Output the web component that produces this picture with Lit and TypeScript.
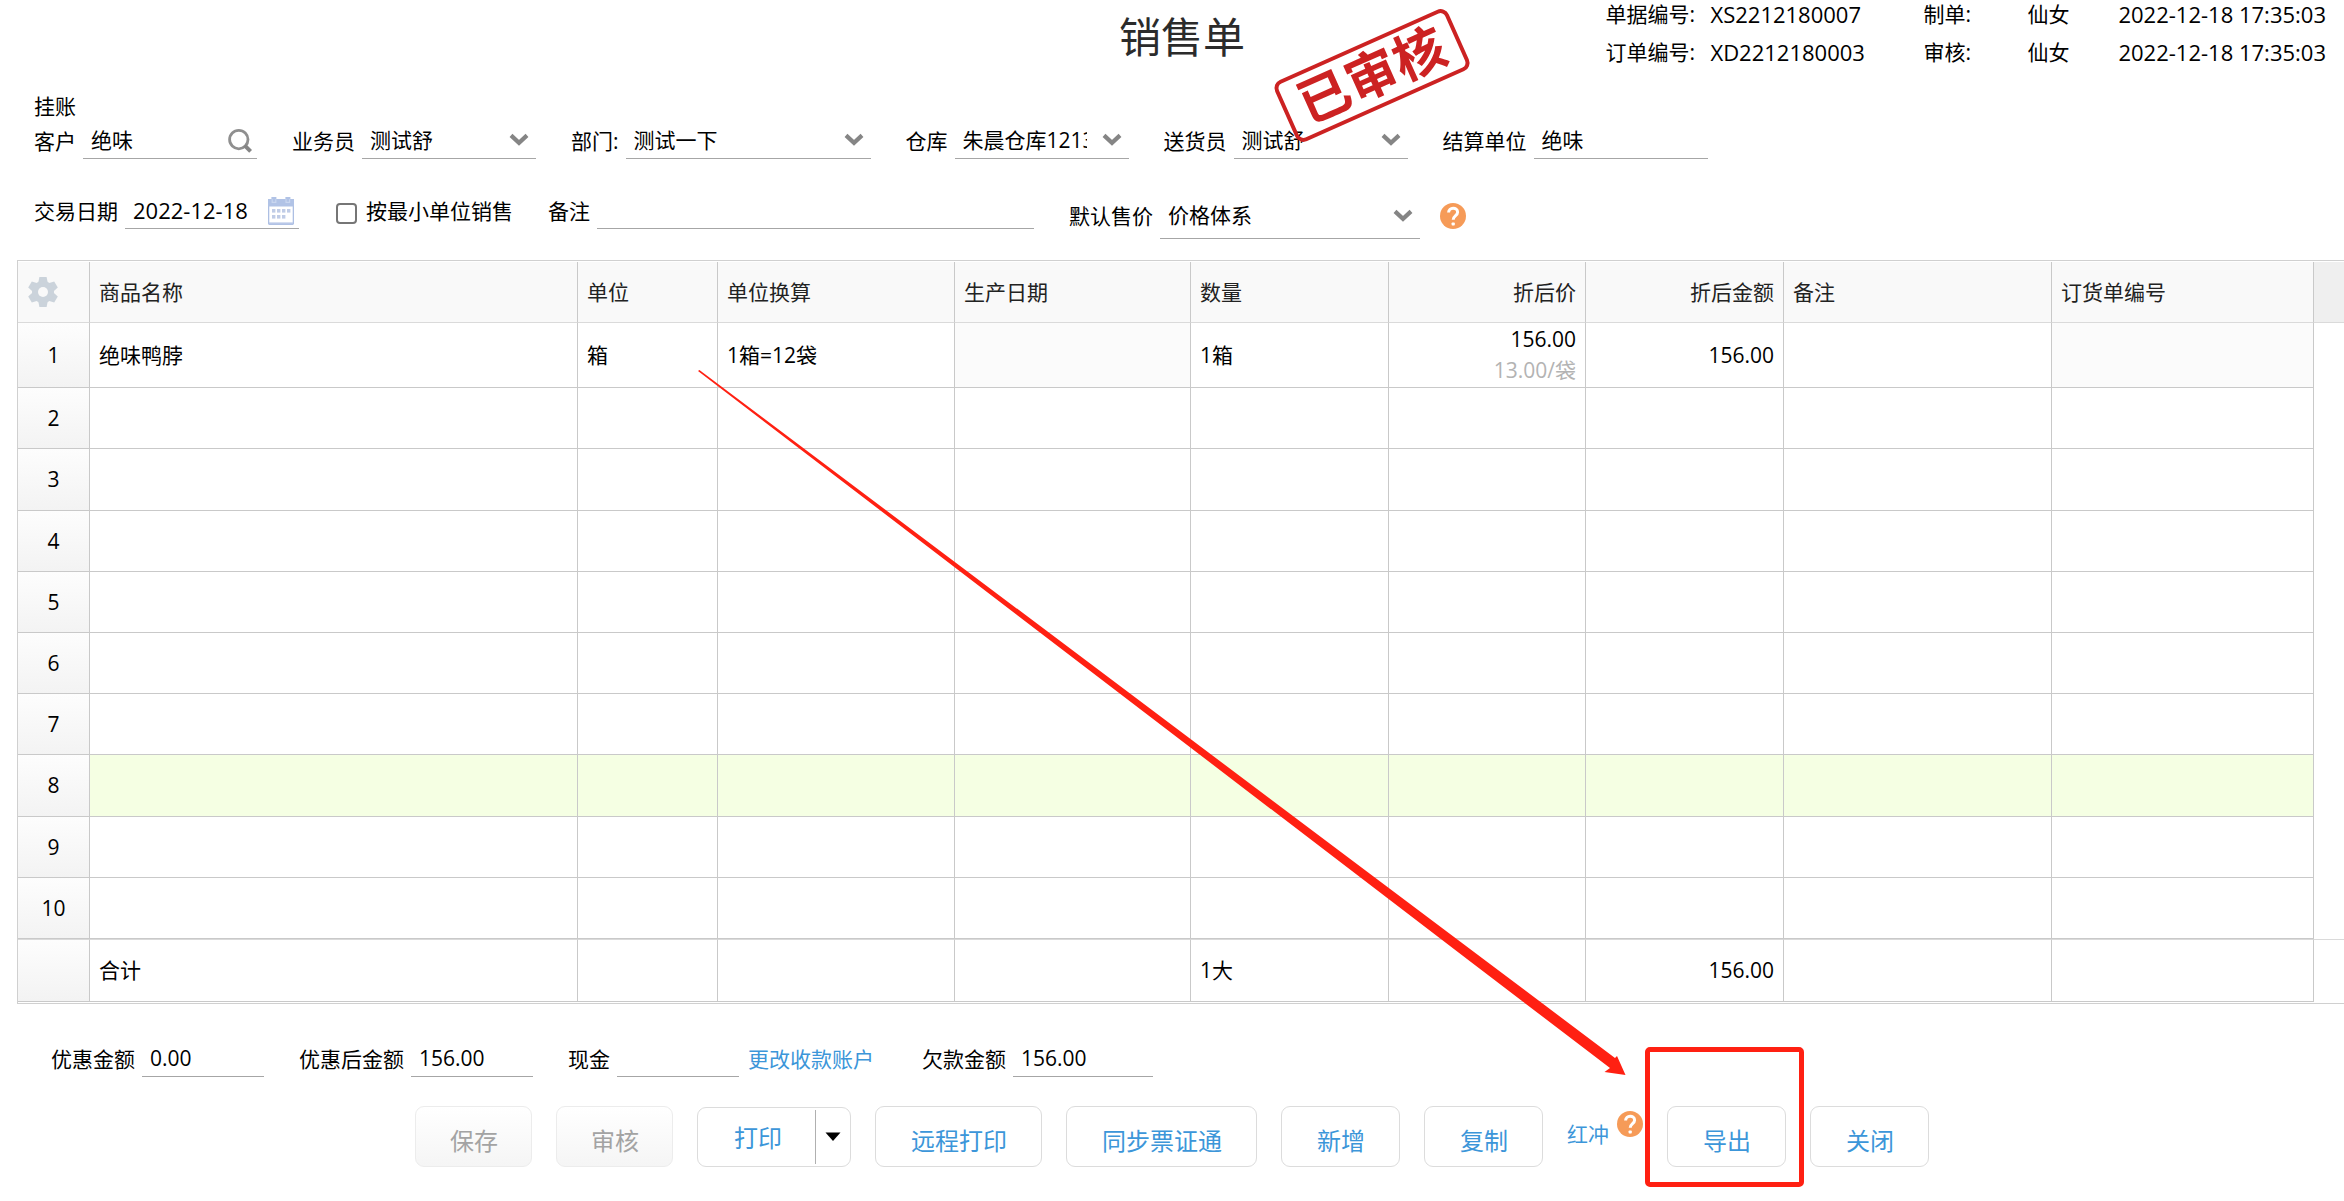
import { LitElement, html, css, nothing, svg } from "lit";
import { customElement } from "lit/decorators.js";
import { classMap } from "lit/directives/class-map.js";

interface Column {
  key: string;
  title: string;
  cls: string;
  right?: boolean;
}

interface Line {
  cells: Record<string, string>;
  locked?: string[];
  sub?: Record<string, string>;
  hover?: boolean;
}

const COLUMNS: Column[] = [
  { key: "name", title: "商品名称", cls: "c-name" },
  { key: "unit", title: "单位", cls: "c-unit" },
  { key: "convert", title: "单位换算", cls: "c-convert" },
  { key: "made", title: "生产日期", cls: "c-made" },
  { key: "qty", title: "数量", cls: "c-num" },
  { key: "price", title: "折后价", cls: "c-price", right: true },
  { key: "amount", title: "折后金额", cls: "c-num", right: true },
  { key: "remark", title: "备注", cls: "c-remark" },
  { key: "order", title: "订货单编号", cls: "c-order" },
];

const LINES: Line[] = Array.from({ length: 10 }, (_, i) =>
  i === 0
    ? {
        cells: { name: "绝味鸭脖", unit: "箱", convert: "1箱=12袋", qty: "1箱", price: "156.00", amount: "156.00" },
        sub: { price: "13.00/袋" },
        locked: ["made", "order"],
      }
    : { cells: {}, hover: i === 7 }
);

const TOTALS: Record<string, string> = { name: "合计", qty: "1大", amount: "156.00" };

const chevron = html`<svg class="chevron" viewBox="0 0 20 13" aria-hidden="true">
  <path d="M2 2.4 L10 9.8 L18 2.4" fill="none" stroke="#858585" stroke-width="4.2" />
</svg>`;

const searchIcon = html`<svg class="search-icon" viewBox="0 0 24 24" aria-hidden="true">
  <circle cx="10.8" cy="10.6" r="9.2" fill="none" stroke="#8f8f8f" stroke-width="2.8" />
  <path d="M16.6 16.4 L22.6 22.4" stroke="#858585" stroke-width="4" />
</svg>`;

const calendarIcon = html`<svg class="calendar-icon" viewBox="0 0 26 28" aria-hidden="true">
  <rect x="0.6" y="2.6" width="24.8" height="24.8" rx="1.4" fill="#fff" stroke="#adbfe3" stroke-width="1.4" />
  <path d="M0 2 h3.4 v-2 h5 v2 h9 v-2 h5 v2 h3.6 v7.6 h-26 z" fill="#b1c3e6" />
  <path d="M4.2 2.2 v3.2 h3.6 v-3.2 M18 2.2 v3.2 h3.6 v-3.2" fill="none" stroke="#c9d6ef" stroke-width="1.2" />
  <g fill="#c0cce6">
    ${[4, 9, 14, 19].map((x) => svg`<rect x=${x} y="12" width="3.4" height="3.6" />`)}
    ${[4, 9, 14].map((x) => svg`<rect x=${x} y="18" width="3.4" height="3.6" />`)}
  </g>
  <path d="M1 26.4 h24" stroke="#b9c8e8" stroke-width="2" />
</svg>`;

const helpIcon = html`<svg class="help-icon" viewBox="0 0 26 26" aria-hidden="true">
  <circle cx="13" cy="13" r="13" fill="#f69b58" />
  <path d="M8.6 9.6 C8.6 3.8 17.6 3.8 17.6 9.2 C17.6 12.6 13.2 12.6 13.2 16.8" fill="none" stroke="#fff" stroke-width="3" />
  <rect x="11.6" y="19.4" width="3.2" height="3.2" rx="0.8" fill="#fff" />
</svg>`;

const gearIcon = html`<svg class="gear-icon" viewBox="-15 -15 30 30" aria-hidden="true">
  <g fill="#cbd3db">
    ${[0, 60, 120].map(
      (a) => svg`<path d="M-4.6 -10 L-3.6 -15 H3.6 L4.6 -10 V10 L3.6 15 H-3.6 L-4.6 10 Z" transform="rotate(${a})" />`
    )}
    <circle r="11" />
  </g>
  <circle r="5" fill="#f9f9f9" />
</svg>`;

@customElement("app-root")
export class AppRoot extends LitElement {
  static styles = css`
    :host {
      display: block;
      position: relative;
      overflow: hidden;
      min-height: 100vh;
      box-sizing: border-box;
      background: #fff;
      color: #000;
      font: 21px/36px "Open Sans", "Noto Sans CJK SC", sans-serif;
    }
    * {
      box-sizing: border-box;
    }
    input,
    select,
    button {
      font: inherit;
      color: inherit;
      margin: 0;
    }
    a {
      color: #3c96d9;
      text-decoration: none;
    }
    svg {
      display: block;
      flex: none;
    }

    .top {
      display: grid;
      grid-template-columns: 1fr auto 1fr;
      align-items: start;
      height: 90px;
      padding-left: 20px;
    }
    .title {
      position: relative;
      grid-column: 2;
      margin: 0;
      font-size: 42px;
      line-height: 74px;
      font-weight: 400;
      color: #2b2b2b;
    }
    .stamp {
      position: absolute;
      left: 158px;
      top: 42px;
      width: 190px;
      height: 67px;
      border: 4px solid #cc2222;
      border-radius: 9px;
      color: #cc2222;
      font-size: 52px;
      line-height: 56px;
      font-weight: 700;
      text-align: center;
      transform: rotate(-24deg);
      z-index: 2;
      pointer-events: none;
    }
    .meta {
      display: grid;
      grid-template-columns: 105px 213px 104px 91px auto;
      justify-self: end;
      margin: -5px 0 0;
      padding-right: 18px;
      line-height: 38px;
      white-space: nowrap;
    }
    .meta dt,
    .meta dd {
      margin: 0;
    }
    .meta .code {
      font-size: 22px;
    }

    .form {
      padding: 0 34px;
    }
    .credit {
      line-height: 33px;
    }
    .row {
      display: flex;
      align-items: flex-start;
      gap: 35px;
      margin-bottom: 34px;
    }
    .row.last {
      margin-bottom: 0;
    }
    .field {
      display: flex;
      gap: 7px;
      white-space: nowrap;
    }
    .box {
      display: flex;
      align-items: center;
      position: relative;
      width: 174px;
      height: 36px;
      border-bottom: 1px solid #a6a6a6;
    }
    .box.dept {
      width: 245px;
    }
    .box.note {
      width: 437px;
    }
    .box.pay {
      width: 122px;
    }
    .box.debt {
      width: 140px;
    }
    .tall {
      line-height: 46px;
    }
    .tall .box {
      width: 260px;
      height: 46px;
    }
    .box input,
    .box select {
      flex: 1;
      min-width: 0;
      width: 100%;
      height: 35px;
      line-height: 35px;
      padding: 0 0 0 8px;
      border: 0;
      outline: 0;
      background: none;
      appearance: none;
      border-radius: 0;
    }
    .box.date input {
      font-size: 22px;
    }
    .box select {
      padding-right: 42px;
    }
    .chevron {
      position: absolute;
      right: 7px;
      top: 10px;
      width: 20px;
      height: 13px;
      pointer-events: none;
    }
    .tall .chevron {
      top: 16px;
    }
    .icon-button {
      flex: none;
      padding: 0 5px 0 0;
      border: 0;
      background: none;
    }
    .search-icon {
      width: 24px;
      height: 24px;
    }
    .calendar-icon {
      width: 26px;
      height: 28px;
    }
    .help-icon {
      width: 26px;
      height: 26px;
    }
    .help-button {
      padding: 0;
      border: 0;
      background: none;
    }
    .price-group {
      display: flex;
      align-items: center;
      gap: 20px;
    }
    .check {
      display: flex;
      gap: 9px;
      white-space: nowrap;
    }
    .check input {
      appearance: none;
      width: 21px;
      height: 21px;
      margin: 10px 0 0 2px;
      border: 2px solid #767676;
      border-radius: 4px;
      background: #fff;
    }

    .grid {
      margin: 21px 0 0 17px;
      padding: 1px 0;
      border: 1px solid #d0d0d0;
      border-right: 0;
    }
    table {
      width: 100%;
      table-layout: fixed;
      border-collapse: separate;
      border-spacing: 0;
    }
    th,
    td {
      padding: 0 9px;
      border-right: 1px solid #c9c9c9;
      border-bottom: 1px solid #c9c9c9;
      font-weight: 400;
      text-align: left;
      line-height: 31px;
      white-space: nowrap;
      overflow: hidden;
    }
    thead th {
      height: 61px;
      background: #f9f9f9;
      border-bottom-color: #dadada;
      color: #222;
    }
    tbody td,
    tbody th {
      height: 61px;
    }
    tbody tr:nth-child(5n + 3) td {
      height: 62px;
    }
    tbody .first td,
    tbody .first th {
      height: 65px;
    }
    tfoot td,
    tfoot th {
      height: 63px;
      border-top: 1px solid #dadada;
    }
    .index {
      padding: 0;
      text-align: center;
    }
    tbody .index,
    tfoot .index {
      background: linear-gradient(#fdfdfd, #f3f3f3);
    }
    .right {
      text-align: right;
    }
    .locked {
      background: #fbfbfb;
    }
    .hover td {
      background: #f5ffe3;
    }
    .sub {
      color: #b3b3b3;
    }
    .spare,
    .hover .spare {
      padding: 0;
      border-right: 0;
      border-bottom-color: transparent;
      background: none;
    }
    thead .spare {
      border-bottom-color: #dadada;
      background: #efefef;
    }
    .gear-button {
      display: block;
      margin-left: 10px;
      padding: 0;
      border: 0;
      background: none;
    }
    .gear-icon {
      width: 30px;
      height: 30px;
    }
    .c-index {
      width: 72px;
    }
    .c-unit {
      width: 140px;
    }
    .c-convert {
      width: 237px;
    }
    .c-made {
      width: 236px;
    }
    .c-num {
      width: 198px;
    }
    .c-price {
      width: 197px;
    }
    .c-remark {
      width: 268px;
    }
    .c-order {
      width: 262px;
    }
    .c-spare {
      width: 30px;
    }

    .payment {
      display: flex;
      gap: 35px;
      padding: 37px 51px 0;
      white-space: nowrap;
    }
    .cash {
      display: flex;
      gap: 9px;
      margin-right: 13px;
    }
    .actions {
      display: flex;
      justify-content: center;
      gap: 24px;
      margin-top: 29px;
      white-space: nowrap;
    }
    .btn {
      height: 61px;
      padding: 8px 34px 0 35px;
      border: 1px solid #dcdcdc;
      border-radius: 9px;
      background: #fff;
      color: #3c96d9;
      font-size: 24px;
      line-height: 50px;
    }
    .btn:disabled {
      padding: 8px 33px 0 34px;
      border-color: #ececec;
      background: linear-gradient(#fff, #f5f5f5);
      color: #a3a3a3;
    }
    .split {
      display: flex;
      align-items: center;
      height: 60px;
      margin-top: 1px;
      border: 1px solid #dcdcdc;
      border-radius: 9px;
    }
    .split-main {
      padding: 2px 33px 0 36px;
      border: 0;
      background: none;
      color: #3c96d9;
      font-size: 24px;
    }
    .split-more {
      height: 54px;
      padding: 0 8px;
      border: 0;
      border-left: 1px solid #b0b0b0;
      background: none;
    }
    .caret {
      width: 18px;
      height: 10px;
    }
    .reverse {
      display: flex;
      gap: 8px;
      line-height: 56px;
    }
    .reverse .help-button {
      height: 26px;
      margin-top: 5px;
    }
    .marked {
      position: relative;
    }
    .frame {
      position: absolute;
      inset: -59px -18px -20px -22px;
      border: 5px solid #ff2012;
      border-radius: 5px;
      pointer-events: none;
    }
    .arrow {
      position: absolute;
      left: 698px;
      top: 370px;
      width: 928px;
      height: 706px;
      pointer-events: none;
    }
  `;

  private text(id: string, label: string, value: string, size = "", icon: unknown = nothing) {
    return html`<div class="field">
      <label for=${id}>${label}</label>
      <div class="box ${size}"><input id=${id} type="text" .value=${value} />${icon}</div>
    </div>`;
  }

  private pick(id: string, label: string, value: string, size = "", group = "") {
    return html`<div class="field ${group}">
      <label for=${id}>${label}</label>
      <div class="box ${size}">
        <select id=${id}>
          <option>${value}</option>
        </select>
        ${chevron}
      </div>
    </div>`;
  }

  private line(line: Line, index: number) {
    return html`<tr class=${classMap({ first: index === 0, hover: !!line.hover })}>
      <th class="index" scope="row">${index + 1}</th>
      ${COLUMNS.map(
        (c) => html`<td class=${classMap({ right: !!c.right, locked: !!line.locked?.includes(c.key) })}>
          ${line.cells[c.key] ?? nothing}${line.sub?.[c.key] ? html`<div class="sub">${line.sub[c.key]}</div>` : nothing}
        </td>`
      )}
      <td class="spare"></td>
    </tr>`;
  }

  render() {
    return html`
      <header class="top">
        <h1 class="title">销售单<span class="stamp">已审核</span></h1>
        <dl class="meta">
          <dt>单据编号:</dt>
          <dd class="code">XS2212180007</dd>
          <dt>制单:</dt>
          <dd>仙女</dd>
          <dd class="code">2022-12-18 17:35:03</dd>
          <dt>订单编号:</dt>
          <dd class="code">XD2212180003</dd>
          <dt>审核:</dt>
          <dd>仙女</dd>
          <dd class="code">2022-12-18 17:35:03</dd>
        </dl>
      </header>

      <section class="form">
        <div class="credit">挂账</div>
        <div class="row">
          ${this.text("customer", "客户", "绝味", "", html`<button class="icon-button" type="button">${searchIcon}</button>`)}
          ${this.pick("salesman", "业务员", "测试舒")} ${this.pick("dept", "部门:", "测试一下", "dept")}
          ${this.pick("store", "仓库", "朱晨仓库12138")} ${this.pick("courier", "送货员", "测试舒")}
          ${this.text("settle", "结算单位", "绝味")}
        </div>
        <div class="row last">
          ${this.text("date", "交易日期", "2022-12-18", "date", html`<button class="icon-button" type="button">${calendarIcon}</button>`)}
          <label class="check"><input type="checkbox" />按最小单位销售</label>
          ${this.text("note", "备注", "", "note")}
          <div class="price-group">
            ${this.pick("pricing", "默认售价", "价格体系", "", "tall")}
            <button class="help-button" type="button">${helpIcon}</button>
          </div>
        </div>
      </section>

      <div class="grid">
        <table>
          <colgroup>
            <col class="c-index" />
            ${COLUMNS.map((c) => html`<col class=${c.cls} />`)}
            <col class="c-spare" />
          </colgroup>
          <thead>
            <tr>
              <th class="index"><button class="gear-button" type="button">${gearIcon}</button></th>
              ${COLUMNS.map((c) => html`<th scope="col" class=${classMap({ right: !!c.right })}>${c.title}</th>`)}
              <th class="spare"></th>
            </tr>
          </thead>
          <tbody>
            ${LINES.map((l, i) => this.line(l, i))}
          </tbody>
          <tfoot>
            <tr>
              <th class="index"></th>
              ${COLUMNS.map((c) => html`<td class=${classMap({ right: !!c.right })}>${TOTALS[c.key] ?? nothing}</td>`)}
              <td class="spare"></td>
            </tr>
          </tfoot>
        </table>
      </div>

      <section class="payment">
        ${this.text("discount", "优惠金额", "0.00", "pay")} ${this.text("net", "优惠后金额", "156.00", "pay")}
        <div class="cash">${this.text("cash", "现金", "", "pay")}<a href="#account">更改收款账户</a></div>
        ${this.text("debt", "欠款金额", "156.00", "debt")}
      </section>

      <footer class="actions">
        <button class="btn" type="button" disabled>保存</button>
        <button class="btn" type="button" disabled>审核</button>
        <div class="split">
          <button class="split-main" type="button">打印</button>
          <button class="split-more" type="button">
            <svg class="caret" viewBox="0 0 18 10" aria-hidden="true"><path d="M1.5 0.5 H16.5 L9 9 Z" fill="#000" /></svg>
          </button>
        </div>
        <button class="btn" type="button">远程打印</button>
        <button class="btn" type="button">同步票证通</button>
        <button class="btn" type="button">新增</button>
        <button class="btn" type="button">复制</button>
        <div class="reverse">
          <a href="#reverse">红冲</a>
          <button class="help-button" type="button">${helpIcon}</button>
        </div>
        <div class="marked">
          <button class="btn" type="button">导出</button>
          <span class="frame"></span>
        </div>
        <button class="btn" type="button">关闭</button>
      </footer>

      <svg class="arrow" viewBox="0 0 928 706" aria-hidden="true">
        <path d="M0 1 L1.4 0 L784 588 L917 688 L919 686 L927.5 705 L906.5 702 L912 698 L769 589 Z" fill="#ff2012" />
      </svg>
    `;
  }
}
